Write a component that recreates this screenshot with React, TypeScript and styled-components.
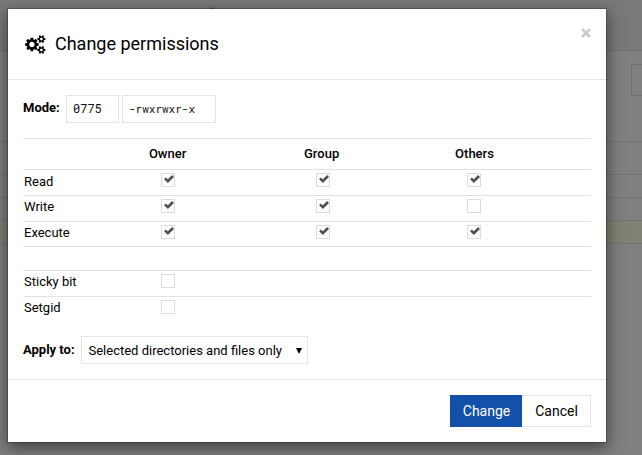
import React, { useState } from "react";
import styled, { createGlobalStyle } from "styled-components";

const GlobalStyle = createGlobalStyle`
  * { box-sizing: border-box; }
  body { margin: 0; overflow: hidden; background: #808080; }
  button, input { font: inherit; }
`;

const Screen = styled.div`
  position: relative;
  width: 642px;
  height: 455px;
  overflow: hidden;
  background: #808080;
  color: #000;
  font: 13px/18px Roboto, sans-serif;
`;

const PageHeader = styled.div`
  height: 51px;
  padding: 7px 0 0 210px;
  background: #797979;
  border-bottom: 1px solid #737373;
`;

const HeaderArrow = styled.svg`
  display: block;
`;

const PageTools = styled.div`
  height: 90px;
  padding-top: 13px;
  display: flex;
  justify-content: flex-end;
`;

const PageField = styled.div`
  width: 11px;
  height: 32px;
  border: 1px solid #727272;
  border-right: 0;
`;

const PageRow = styled.div<{ $height: number; $selected?: boolean }>`
  height: ${(p) => p.$height}px;
  border-top: 1px solid #737373;
  background: ${(p) => (p.$selected ? "#808074" : "transparent")};
`;

const Dialog = styled.section`
  position: absolute;
  left: 7px;
  top: 8px;
  width: 600px;
  height: 435px;
  display: flex;
  flex-direction: column;
  background: #fff;
  background-clip: padding-box;
  border: 1px solid rgba(0, 0, 0, 0.2);
  box-shadow: 0 5px 15px rgba(0, 0, 0, 0.5);
`;

const DialogHeader = styled.header`
  display: flex;
  align-items: center;
  height: 71px;
  padding: 0 14.5px 0 17px;
  border-bottom: 1px solid #e5e5e5;
`;

const Title = styled.h1`
  flex: 1;
  margin: 0 0 0 9.4px;
  font-size: 18px;
  line-height: 26px;
  font-weight: 400;
`;

const CloseButton = styled.button`
  display: flex;
  align-self: flex-start;
  margin-top: 18px;
  padding: 0;
  border: 0;
  background: none;
`;

const DialogBody = styled.div`
  flex: 1;
  padding: 15px 15px 0;
`;

const FormRow = styled.div`
  display: flex;
  align-items: flex-start;
  height: 28px;
`;

const Label = styled.label<{ $width: number; $top: number }>`
  width: ${(p) => p.$width}px;
  padding-top: ${(p) => p.$top}px;
  font-weight: 700;
  white-space: nowrap;
`;

const ModeInput = styled.input<{ $width: number; $size: number }>`
  width: ${(p) => p.$width}px;
  height: 28px;
  margin-right: 3px;
  padding: 0 6px 2px;
  border: 1px solid #e5e5e5;
  border-radius: 0;
  background: #fff;
  color: #111;
  outline: 0;
  font-family: "Roboto Mono", "Liberation Mono", monospace;
  font-size: ${(p) => p.$size}px;
`;

const Table = styled.div`
  margin-top: 15px;
`;

const TableRow = styled.div<{ $height: number }>`
  display: grid;
  grid-template-columns: 68px 154px 154px 150px;
  align-items: start;
  height: ${(p) => p.$height}px;
  border-top: 1px solid #e2e2e2;
`;

const HeadCell = styled.span`
  padding: 6px 0.8px 0 0;
  text-align: center;
  font-weight: 500;
`;

const LastHeadCell = styled(HeadCell)`
  padding: 6px 0 0 1px;
`;

const RowName = styled.span<{ $top: number }>`
  padding: ${(p) => p.$top}px 0 0 1px;
  white-space: nowrap;
`;

const CheckCell = styled.span<{ $shift: number }>`
  display: flex;
  justify-content: center;
  padding: 3px 0 0 ${(p) => p.$shift}px;
`;

const Box = styled.button`
  width: 14px;
  height: 14px;
  display: flex;
  padding: 1px 0 0 1.5px;
  border: 1px solid #dcdcdc;
  background: #fff;
`;

const SelectBox = styled.button`
  display: flex;
  align-items: center;
  justify-content: space-between;
  width: 227px;
  height: 28px;
  padding: 1px 5px 0 6.5px;
  border: 1px solid #e5e5e5;
  background: #fff;
  color: #000;
  white-space: nowrap;
`;

const ApplyRow = styled(FormRow)`
  margin-top: 15px;
`;

const DialogFooter = styled.footer`
  display: flex;
  justify-content: flex-end;
  height: 63px;
  padding: 15px 15px 0;
  border-top: 1px solid #e5e5e5;
`;

const ActionButton = styled.button<{ $primary?: boolean }>`
  width: ${(p) => (p.$primary ? 72 : 69)}px;
  height: 32px;
  padding: 0 0 0 1px;
  border: 1px solid ${(p) => (p.$primary ? "#1250aa" : "#e5e5e5")};
  border-left-width: ${(p) => (p.$primary ? 1 : 0)}px;
  background: ${(p) => (p.$primary ? "#1250aa" : "#fff")};
  color: ${(p) => (p.$primary ? "#fff" : "#000")};
  font-size: 14px;
`;

const smallGear =
  "v140q0 16-149 31-12 27-30 52 51 113 51 138 0 4-4 7-122 71-124 71-8 0-46-47t-52-68q-20 2-30 2t-30-2q-14 21-52 68t-46 47q-2 0-124-71-4-3-4-7 0-25 51-138-18-25-30-52-149-15-149-31v-140q0-16 149-31 13-29 30-52-51-113-51-138 0-4 4-7 4-2 35-20t59-34 30-16q8 0 46 46.5t52 67.5q20-2 30-2t30 2q51-71 92-112l6-2q4 0 124 70 4 3 4 7 0 25-51 138 17 23 30 52 149 15 149 31z";

const CogsIcon = () => (
  <svg width="20.6" height="19" viewBox="0 0 1920 1792" aria-hidden="true">
    <path
      fillRule="evenodd"
      d="M896 896q0-106-75-181t-181-75-181 75-75 181 75 181 181 75 181-75 75-181zM1280 805v185q0 10-7 19.5t-16 10.5l-155 24q-11 35-32 76 34 48 90 115 7 11 7 20 0 12-7 19-23 30-82.5 89.5t-78.5 59.5q-11 0-21-7l-115-90q-37 19-77 31-11 108-23 155-7 24-30 24h-186q-11 0-20-7.5t-10-17.5l-23-153q-34-10-75-31l-118 89q-7 7-20 7-11 0-21-8-144-133-144-160 0-9 7-19 10-14 41-53t47-61q-23-44-35-82l-152-24q-10-1-17-9.5t-7-19.5v-185q0-10 7-19.5t16-10.5l155-24q11-35 32-76-34-48-90-115-7-11-7-20 0-12 7-20 22-30 82-89t79-59q11 0 21 7l115 90q34-18 77-32 11-108 23-154 7-24 30-24h186q11 0 20 7.5t10 17.5l23 153q34 10 75 31l118-89q8-7 20-7 11 0 21 8 144 133 144 160 0 8-7 19-12 16-42 54t-45 60q23 48 34 82l152 23q10 2 17 10.5t7 19.5z"
    />
    {[1338, 314].map((y) => (
      <path
        key={y}
        fillRule="evenodd"
        d={`M1664 ${y + 70}q0-52-38-90t-90-38-90 38-38 90q0 53 37.5 90.5t90.5 37.5 90.5-37.5 37.5-90.5zM1920 ${y}${smallGear}`}
      />
    ))}
  </svg>
);

const CheckMark = () => (
  <svg width="10" height="9" viewBox="0 0 10 9" aria-hidden="true">
    <path d="M.1 4.2 1.7 2.5l2.1 1.8L8.1 0 10 1.9 3.9 8Z" fill="#505050" />
  </svg>
);

const CrossMark = () => (
  <svg width="12" height="12" viewBox="0 0 12 12" aria-hidden="true">
    <path d="m2 2 8 8m0-8-8 8" stroke="#ccc" strokeWidth="2.8" />
  </svg>
);

const Caret = () => (
  <svg width="6" height="6" viewBox="0 0 6 6" aria-hidden="true">
    <path d="M0 0h6L3 6Z" fill="#000" />
  </svg>
);

const permissionRows = [
  { name: "Read", bits: [true, true, true], height: 26, top: 3 },
  { name: "Write", bits: [true, true, false], height: 26, top: 2 },
  { name: "Execute", bits: [true, true, true], height: 25, top: 2 },
  { name: "", bits: [], height: 24, top: 0 },
  { name: "Sticky bit", bits: [false], height: 26, top: 2 },
  { name: "Setgid", bits: [false], height: 25, top: 2 },
];

const shifts = [0, 2, 0];

function Checkbox({ initial, label }: { initial: boolean; label: string }) {
  const [checked, setChecked] = useState(initial);
  return (
    <Box
      role="checkbox"
      aria-checked={checked}
      aria-label={label}
      onClick={() => setChecked(!checked)}
    >
      {checked && <CheckMark />}
    </Box>
  );
}

export default function App() {
  return (
    <>
      <GlobalStyle />
      <Screen>
        <PageHeader>
          <HeaderArrow width="4" height="3" viewBox="0 0 4 3" aria-hidden="true">
            <path d="M2 0 4 3H0Z" fill="#444" />
          </HeaderArrow>
        </PageHeader>
        <PageTools>
          <PageField />
        </PageTools>
        <PageRow $height={33} />
        <PageRow $height={23} />
        <PageRow $height={23} />
        <PageRow $height={23} $selected />
        <PageRow $height={212} />
        <Dialog role="dialog" aria-label="Change permissions">
          <DialogHeader>
            <CogsIcon />
            <Title>Change permissions</Title>
            <CloseButton aria-label="Close">
              <CrossMark />
            </CloseButton>
          </DialogHeader>
          <DialogBody>
            <FormRow>
              <Label $width={43} $top={4}>Mode:</Label>
              <ModeInput $width={53} $size={12} defaultValue="0775" aria-label="Octal mode" />
              <ModeInput $width={94} $size={11} defaultValue="-rwxrwxr-x" aria-label="Symbolic mode" />
            </FormRow>
            <Table>
              <TableRow $height={31}>
                <span />
                <HeadCell>Owner</HeadCell>
                <HeadCell>Group</HeadCell>
                <LastHeadCell>Others</LastHeadCell>
              </TableRow>
              {permissionRows.map((row, i) => (
                <TableRow key={i} $height={row.height}>
                  <RowName $top={row.top}>{row.name}</RowName>
                  {row.bits.map((bit, col) => (
                    <CheckCell key={col} $shift={shifts[col]}>
                      <Checkbox initial={bit} label={row.name} />
                    </CheckCell>
                  ))}
                </TableRow>
              ))}
            </Table>
            <ApplyRow>
              <Label $width={58} $top={5}>Apply to:</Label>
              <SelectBox>
                Selected directories and files only
                <Caret />
              </SelectBox>
            </ApplyRow>
          </DialogBody>
          <DialogFooter>
            <ActionButton $primary>Change</ActionButton>
            <ActionButton>Cancel</ActionButton>
          </DialogFooter>
        </Dialog>
      </Screen>
    </>
  );
}
